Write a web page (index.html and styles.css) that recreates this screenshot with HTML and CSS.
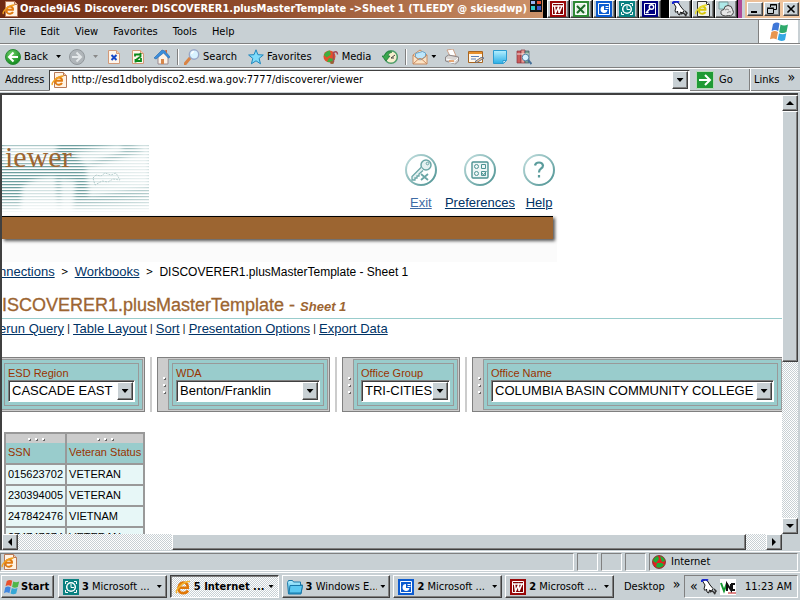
FILE: index.html
```html
<!DOCTYPE html>
<html lang="en">
<head>
<meta charset="utf-8">
<title>Oracle9iAS Discoverer</title>
<link rel="stylesheet" href="styles.css">
</head>
<body>
<svg class="defs" aria-hidden="true">
  <defs>
    <radialGradient id="green" cx=".4" cy=".3" r=".7"><stop offset="0" stop-color="#6fd069"/><stop offset="1" stop-color="#118a1c"/></radialGradient>
    <linearGradient id="blue" x2="0" y2="1"><stop offset="0" stop-color="#b6f0ff"/><stop offset="1" stop-color="#2aaee6"/></linearGradient>
    <linearGradient id="ring" x2="1" y2="1"><stop offset="0" stop-color="#c3dfdf"/><stop offset="1" stop-color="#4c9292"/></linearGradient>
  </defs>
  <symbol id="ie-page" viewBox="0 0 16 16">
    <path d="M3.500.500h9l3 3v12h-12z" fill="#fff3e4" stroke="#b97a58"/><path d="M12.500.500v3h3" fill="#f6c9a4" stroke="#b97a58"/>
    <path d="M11 11c-1 2-4.500 2.500-6 .500C3.500 9 5 5.500 7.800 5.500c2.200 0 3.500 1.500 3.200 3.200H5" fill="none" stroke="#e07a10" stroke-width="2"/>
    <path d="M1.500 13c-2-2 5-9 11-9" fill="none" stroke="#f2a020" stroke-width="1.500"/>
  </symbol>
  <symbol id="ie-yellow" viewBox="0 0 16 16">
    <path d="M2.500.500h9l3 3v12h-12z" fill="#f2f2ea" stroke="#333"/><path d="M11.500.500v3h3" fill="#fff" stroke="#333"/>
    <path d="M10.500 11c-1 2-4.500 2.500-6 .500C3 9 4.500 5.500 7.300 5.500c2.200 0 3.500 1.500 3.200 3.200h-6" fill="none" stroke="#d8c80a" stroke-width="2"/>
    <path d="M1 13c-2-2 5-9 11-9" fill="none" stroke="#e8dc30" stroke-width="1.500"/>
  </symbol>
  <symbol id="ie" viewBox="0 0 16 16">
    <path d="M13 11.500c-2 3.500-7.500 3.500-9 .2C2.300 8 5 3.500 8.500 3.500c3 0 4.600 2.500 4.300 5.200H4.500" fill="none" stroke="#e07808" stroke-width="2.600"/>
    <path d="M2 14c-3-2 6-12 13-11.500" fill="none" stroke="#f5b32c" stroke-width="1.600"/>
  </symbol>
  <symbol id="back" viewBox="0 0 16 16"><circle cx="8" cy="8" r="7.500" fill="url(#green)" stroke="#2b8a38"/><path d="M8.500 3.500L4 8l4.500 4.500M4.500 8H13" fill="none" stroke="#fff" stroke-width="2"/></symbol>
  <symbol id="forward" viewBox="0 0 16 16"><circle cx="8" cy="8" r="7.500" fill="#b0b6ba" stroke="#92989c"/><path d="M7.500 3.500L12 8l-4.500 4.500M11.500 8H3" fill="none" stroke="#e4e8ea" stroke-width="2"/></symbol>
  <symbol id="page" viewBox="0 0 16 16"><path d="M2.500 1.500h8l3 3v10h-11z" fill="#fff6ec" stroke="#d39a78"/><path d="M10.500 1.500v3h3" fill="#f7cfb2" stroke="#d39a78"/></symbol>
  <symbol id="stop" viewBox="0 0 16 16"><use href="#page"/><path d="M5.500 6l5 5M10.500 6l-5 5" stroke="#1648c8" stroke-width="2"/></symbol>
  <symbol id="refresh" viewBox="0 0 16 16"><use href="#page"/><path d="M5 7.500V5.500h6M10.500 4v3.500L6 11M11 9v3H5M5.500 13.500V10" fill="none" stroke="#0a8a1e" stroke-width="1.800"/></symbol>
  <symbol id="home" viewBox="0 0 16 16"><path d="M4 8v7h10V7L9 3z" fill="#fff3e6" stroke="#9a8a90"/><path d="M0 9l8-8 3 1 5 6-1.500 1.200L9.500 4 2 10z" fill="#3b8fdc" stroke="#2364ac" stroke-width=".6"/><path d="M11 1h2v4" fill="#c46b42"/><path d="M7 10h3v5H7z" fill="#d5874c"/></symbol>
  <symbol id="search" viewBox="0 0 16 16"><path d="M1 15l5-6" stroke="#d98445" stroke-width="3" stroke-linecap="round"/><circle cx="10" cy="5.500" r="4.700" fill="#d8f2ff" stroke="#9aa7c7" stroke-width="1.400"/><path d="M7.500 5q.5-2 2.500-2.400" stroke="#fff" stroke-width="1.500" fill="none"/></symbol>
  <symbol id="star" viewBox="0 0 16 16"><path d="M8 .8l1.900 4.900 5.400.3-4.200 3.400 1.400 5.400L8 11.800l-4.600 3 1.400-5.400L.6 6l5.400-.3z" fill="#7fdcfb" stroke="#1e87bd"/></symbol>
  <symbol id="media" viewBox="0 0 16 16"><circle cx="6.500" cy="7.500" r="6" fill="#e4502a"/><path d="M.8 6q2-4 6-4.500l1 4-4 3zM4 13l2-4 6 1-3 3z" fill="#3eaf3e"/><path d="M10.500 13V3.500q4-2 4 2" fill="none" stroke="#a3495c" stroke-width="1.500"/><ellipse cx="9" cy="13.500" rx="2" ry="1.500" fill="#9b6135"/></symbol>
  <symbol id="history" viewBox="0 0 16 16"><circle cx="9" cy="8" r="6.300" fill="#f7efcf" stroke="#4d9d69" stroke-width="1.500"/><path d="M0 7l4 5 4-5H6q0-3 4-4-5-2-8 4z" fill="#39a84e" stroke="#167030" stroke-width=".7"/><path d="M9 9l4-3M9 9h3" stroke="#444"/></symbol>
  <symbol id="mail" viewBox="0 0 16 16"><path d="M1 6l7-5 7 5v9H1z" fill="#fde3c4" stroke="#c88c62"/><path d="M3.500 4.500l7-2 3 1.500V8L8 11 3.500 8z" fill="#bde6fb" stroke="#6aa6cc"/><path d="M1 15l6-5.500h2l6 5.500M1 6l6 5M15 6l-6 5" fill="none" stroke="#c88c62"/></symbol>
  <symbol id="print" viewBox="0 0 16 16"><path d="M3 1l6-1 3 7H6z" fill="#fff" stroke="#c58f70" stroke-width=".8"/><path d="M1.500 8l3-2 10 2v4l-3 3-10-3z" fill="#d9d6d4" stroke="#8d8788"/><path d="M2 10l9 2 3-3M5 13l6 1" stroke="#fff" fill="none"/><path d="M5 12h5" stroke="#e39354" stroke-width="1.500"/></symbol>
  <symbol id="edit" viewBox="0 0 16 16"><path d="M.5 2.500h14v11H.5z" fill="#fff8ec" stroke="#a86520"/><path d="M1 3h13v2H1z" fill="#e8902a"/><path d="M3 7.500h8M3 10h5" stroke="#5b80b8"/><path d="M7 12.500l6-4 3 .5-7 4.500z" fill="#f1c48e" stroke="#465f8c" stroke-width=".8"/></symbol>
  <symbol id="note" viewBox="0 0 16 16"><path d="M1.500 1.500h13v10l-3 3h-10z" fill="url(#blue)" stroke="#2b9cd0"/><path d="M14 11.500h-3V14" fill="#fff" stroke="#2b9cd0"/></symbol>
  <symbol id="research" viewBox="0 0 16 16"><path d="M1 2h4v12H1z" fill="#c95a5a" stroke="#8a3440" stroke-width=".7"/><path d="M5 1h4v13H5z" fill="#e79a92" stroke="#8a3440" stroke-width=".7"/><path d="M9 2h4v12H9z" fill="#7aa590" stroke="#456" stroke-width=".7"/><path d="M1 5h12" stroke="#fff" stroke-width=".8"/><circle cx="9.500" cy="8.500" r="3.300" fill="#d9f2ff" stroke="#5885a8"/><path d="M12 11l3.500 4" stroke="#456f98" stroke-width="2"/></symbol>
  <symbol id="flag" viewBox="0 0 16 16"><path d="M2.800 2q3-2 5.400-.2L7.100 7.300q-2.700-2-5.600 0z" fill="#e8502c"/><path d="M9.200 2.500q2.800 1.600 6 0l-1.400 5.500q-3 1.600-5.700 0z" fill="#4fb648"/><path d="M1.200 8.500q2.800-2 5.500 0l-1.300 5.700q-2.700-2-5.400 0z" fill="#3f86e0"/><path d="M7.800 9q2.800 1.600 5.700 0l-1.300 5.500q-3 1.600-5.700 0z" fill="#35a8d6"/></symbol>
  <symbol id="winflag" viewBox="0 0 20 20"><path d="M4 2q4-2.500 6.500-.5L9.200 9Q6 7 2.600 9z" fill="#3f78d8"/><path d="M11.500 2.500q3.500 2 7.500 0L17.500 10q-3.500 2-7.300.2z" fill="#2faa6c"/><path d="M2.400 10q3.300-2 6.600 0l-1.400 7.500q-3.200-2-6.600-.2z" fill="#e8964e"/><path d="M10 11.200q3.500 2 7.300 0L16 18q-3.800 2-7.400-.2z" fill="#35a8e6"/></symbol>
  <symbol id="word" viewBox="0 0 16 16"><path d="M0 0h16v16H0z" fill="#990808"/><path d="M2.500 2.500h11v11h-11z" fill="#800000" stroke="#fff"/><path d="M3 5h10M4.500 5l1 7 3-6 .5 6 3-7" fill="none" stroke="#fff" stroke-width="1.500"/></symbol>
  <symbol id="excel" viewBox="0 0 16 16"><path d="M0 0h16v16H0z" fill="#2f8a35"/><path d="M2.500 2.500h11v11h-11z" fill="#e7f3e4" stroke="#fff"/><path d="M4 5l7 7M12 4l-8 8" stroke="#1c6a28" stroke-width="2"/></symbol>
  <symbol id="outlook" viewBox="0 0 16 16"><path d="M0 0h16v16H0z" fill="#0b5bd0"/><path d="M2.500 2.500h11v11h-11z" fill="none" stroke="#fff"/><path d="M8 5a3.500 3.500 0 1 0 3.500 4H8z" fill="#fff"/><path d="M9.500 5.500h3M9.500 7.500h3" stroke="#fff"/></symbol>
  <symbol id="clock" viewBox="0 0 16 16"><path d="M0 0h16v16H0z" fill="#0a8080"/><path d="M5 2.500H2.500V5M11 2.500h2.500V5M2.500 11v2.500H5M13.500 11v2.500H11" fill="none" stroke="#fff"/><circle cx="8" cy="8" r="4.300" fill="none" stroke="#fff" stroke-width="1.500"/><path d="M8 5v3.500h3" fill="none" stroke="#fff"/></symbol>
  <symbol id="key" viewBox="0 0 16 16"><path d="M0 0h16v16H0z" fill="#000080"/><path d="M2.500 2.500h11v11h-11z" fill="none" stroke="#fff"/><circle cx="9.500" cy="6" r="2.200" fill="none" stroke="#fff" stroke-width="1.400"/><path d="M8 7.500L4 12M5 11l1.500 1" stroke="#fff" stroke-width="1.500"/></symbol>
  <symbol id="hand" viewBox="0 0 16 16"><path d="M1.500 2q3-2 5 0l2.500 4 3 3.500-1.500 2.500-2-1-1 3-1.500-1-.5-3-1.500 1.500-1-1.500 1-4z" fill="#fff" stroke="#000" stroke-width=".9"/><path d="M1 3V1.500q3-2 6 0" fill="none" stroke="#1726d0" stroke-width="2"/><path d="M8.500 13l3-1 3 3M13 10l2 2-2 3" fill="none" stroke="#333" stroke-width="1.500"/></symbol>
  <symbol id="cloud" viewBox="0 0 16 16"><path d="M1 1h9v7H1z" fill="#aee9e9" stroke="#7a9a9a"/><path d="M5 14.500q-3-1-2-4 1-2 3-2 0-4 4-4t4.500 4q2 3 0 5-2 2-4 1-3 1-5.500 0z" fill="#e6e6e6" stroke="#444"/><path d="M7 9q2-2 4 0M9 12q2-2 4-1" fill="none" stroke="#888"/></symbol>
  <symbol id="folder" viewBox="0 0 16 16"><path d="M.5 3.500l1-2h4l1 1.500h7v3h2l-1.500 9H1.500z" fill="url(#blue)" stroke="#1a78a8"/><path d="M3 6.500h12.500L14 14H2z" fill="#5cc9f2" stroke="#1a78a8"/></symbol>
  <symbol id="globe" viewBox="0 0 16 16"><circle cx="8" cy="8" r="6.500" fill="#e02020" stroke="#5a0a0a" stroke-width=".6"/><path d="M2 7q1-4 5-5l1 3-3 4zM9 2q4 1 5 5l-3 1zM5 13l1-4 5 0 2 2q-3 4-8 2z" fill="#1cae38"/></symbol>
  <symbol id="vnc" viewBox="0 0 16 16"><path d="M0 0h16v16H0z" fill="#fff"/><path d="M1 4l3 8 3-8" fill="none" stroke="#149a30" stroke-width="2"/><path d="M7 12V5l4 6V5M15 5h-3v6h3" fill="none" stroke="#111" stroke-width="2"/><path d="M8 14h8" stroke="#c01010"/></symbol>
  <symbol id="tiles" viewBox="0 0 12 12"><path d="M0 0h12v12H0z" fill="#111"/><path d="M1 1h4v3H1z" fill="#9ab4f0"/><path d="M7 1h4v3H7z" fill="#e85030"/><path d="M1 6h4v4H1z" fill="#30c8c8"/><path d="M7 6h4v4H7z" fill="#3c58c8"/></symbol>
</svg>

<header class="titlebar">
  <svg class="icon"><use href="#ie-page"/></svg>
  <h1>Oracle9iAS Discoverer: DISCOVERER1.plusMasterTemplate -&gt;Sheet 1 (TLEEDY @ skiesdwp)</h1>
  <svg class="tiles"><use href="#tiles"/></svg>
  <div class="office">
    <button class="launch" aria-label="Word"><svg class="icon"><use href="#word"/></svg></button>
    <button class="launch" aria-label="Excel"><svg class="icon"><use href="#excel"/></svg></button>
    <button class="launch" aria-label="PowerPoint"><svg class="icon"><use href="#outlook"/></svg></button>
    <button class="launch" aria-label="Schedule"><svg class="icon"><use href="#clock"/></svg></button>
    <button class="launch" aria-label="Access"><svg class="icon"><use href="#key"/></svg></button>
    <span class="divider"></span>
    <button class="launch" aria-label="Assistant"><svg class="icon"><use href="#hand"/></svg></button>
    <button class="launch" aria-label="Browser"><svg class="icon"><use href="#ie-yellow"/></svg></button>
    <button class="launch" aria-label="Network"><svg class="icon"><use href="#cloud"/></svg></button>
    <span class="stub"></span>
  </div>
  <div class="caption">
    <button aria-label="Minimize"><svg viewBox="0 0 10 10"><path d="M1 8h6" stroke="#000" stroke-width="2"/></svg></button>
    <button aria-label="Restore"><svg viewBox="0 0 10 10"><path d="M3.500 3V.500h6v5H7M3 1h7M.500 4.500h6v5h-6zM0 4h7" fill="none" stroke="#000"/></svg></button>
    <button class="close" aria-label="Close"><svg viewBox="0 0 10 10"><path d="M1.500 1.500l7 7M8.500 1.500l-7 7" stroke="#000" stroke-width="1.600"/></svg></button>
  </div>
</header>

<div class="menubar">
  <nav class="menus"><button>File</button><button>Edit</button><button>View</button><button>Favorites</button><button>Tools</button><button>Help</button></nav>
  <div class="brand"><svg class="windows"><use href="#winflag"/></svg></div>
</div>

<div class="toolbar">
  <div class="tools">
    <button class="tool"><svg class="icon"><use href="#back"/></svg><span>Back</span></button>
    <span class="caret"></span>
    <button class="tool" aria-label="Forward"><svg class="icon"><use href="#forward"/></svg></button>
    <span class="caret dim"></span>
    <button class="tool" aria-label="Stop"><svg class="icon"><use href="#stop"/></svg></button>
    <button class="tool" aria-label="Refresh"><svg class="icon"><use href="#refresh"/></svg></button>
    <button class="tool" aria-label="Home"><svg class="icon"><use href="#home"/></svg></button>
  </div>
  <div class="tools wide">
    <button class="tool"><svg class="icon"><use href="#search"/></svg><span>Search</span></button>
    <button class="tool"><svg class="icon"><use href="#star"/></svg><span>Favorites</span></button>
    <button class="tool"><svg class="icon"><use href="#media"/></svg><span>Media</span></button>
    <button class="tool" aria-label="History"><svg class="icon"><use href="#history"/></svg></button>
  </div>
  <div class="tools">
    <button class="tool" aria-label="Mail"><svg class="icon"><use href="#mail"/></svg><i class="caret"></i></button>
    <button class="tool" aria-label="Print"><svg class="icon"><use href="#print"/></svg></button>
    <button class="tool" aria-label="Edit"><svg class="icon"><use href="#edit"/></svg></button>
    <button class="tool" aria-label="Discuss"><svg class="icon"><use href="#note"/></svg></button>
    <button class="tool" aria-label="Research"><svg class="icon"><use href="#research"/></svg></button>
  </div>
</div>

<div class="addressbar">
  <label for="url">Address</label>
  <div class="field">
    <svg class="icon"><use href="#ie-page"/></svg>
    <input id="url" type="text" value="http://esd1dbolydisco2.esd.wa.gov:7777/discoverer/viewer">
    <button class="drop" aria-label="Show history"><span class="caret"></span></button>
  </div>
  <button class="go"><svg viewBox="0 0 18 18"><path d="M.500.500h17v17H.500z" fill="#1f9a35" stroke="#b7dcb8"/><path d="M3 9h11M9 4l5 5-5 5" fill="none" stroke="#fff" stroke-width="2"/></svg>Go</button>
  <button class="links">Links <span>»</span></button>
</div>

<div class="viewport">
  <main class="page">
    <div class="banner">
      <div class="logo">
        <svg viewBox="0 0 147 68" preserveAspectRatio="none">
          <defs>
            <pattern id="lines" width="3" height="3" patternUnits="userSpaceOnUse"><path d="M0 0h3v1H0z" fill="#6d9f9f"/><path d="M0 1h3v1H0z" fill="#d8e5e5"/></pattern>
            <filter id="soft"><feGaussianBlur stdDeviation="2"/></filter>
            <linearGradient id="fade"><stop offset=".5" stop-color="#fff" stop-opacity="0"/><stop offset="1" stop-color="#fff" stop-opacity=".5"/></linearGradient>
            <linearGradient id="foot" x2="0" y2="1"><stop offset=".75" stop-color="#fff" stop-opacity="0"/><stop offset="1" stop-color="#fff"/></linearGradient>
          </defs>
          <path d="M0 0h147v68H0z" fill="url(#lines)"/>
          <g filter="url(#soft)" fill="#fff" opacity=".7">
            <path d="M20 42q16-12 34-10l3 36H18zM58 34l16 2-3 32H58zM84 22l63-16v36l-60 10zM0 0h56l-6 18H0zM70 8l44-8h4l4 6-38 14zM130 0h17v8z"/>
          </g>
          <path d="M91 33l3-3 5 1 4-3 6 2 5-2 4 7-7-1-5 3-6-1-7 4z" fill="none" stroke="#a5c2c2" stroke-dasharray="2 1"/>
          <path d="M0 0h147v68H0z" fill="url(#fade)"/><path d="M0 0h147v68H0z" fill="url(#foot)"/>
        </svg>
        <span class="product">iewer</span>
      </div>
      <nav class="global">
        <a class="visited" href="#exit"><svg viewBox="0 0 32 32"><circle cx="16" cy="16" r="15" fill="#fff" stroke="url(#ring)" stroke-width="2"/><circle cx="21" cy="11" r="5" fill="#e4f1f1" stroke="#6ba6a6" stroke-width="1.500"/><circle cx="22.500" cy="9.500" r="1.300" fill="none" stroke="#6ba6a6"/><path d="M16.500 13L7 22.500V26h3v-2h2v-2h2v-2l4-3.500" fill="#e4f1f1" stroke="#6ba6a6" stroke-width="1.300"/><path d="M16 20l7 6M23 20l-7 6" stroke="#6ba6a6" stroke-width="1.800"/></svg>Exit</a>
        <a href="#preferences"><svg viewBox="0 0 32 32"><circle cx="16" cy="16" r="15" fill="#fff" stroke="url(#ring)" stroke-width="2"/><rect x="8" y="8" width="16" height="16" rx="1" fill="#eef6f6" stroke="#4f9494" stroke-width="1.400"/><circle cx="12.500" cy="12.500" r="2" fill="none" stroke="#4f9494"/><circle cx="12.500" cy="19.500" r="2" fill="none" stroke="#4f9494"/><path d="M17.500 10.500h4v4h-4zM17.500 17.500h4v4h-4zM18 19l1.500 2 3-4" fill="none" stroke="#4f9494"/></svg>Preferences</a>
        <a href="#help"><svg viewBox="0 0 32 32"><circle cx="16" cy="16" r="15" fill="#fff" stroke="url(#ring)" stroke-width="2"/><path d="M12 11.500q.5-3 4-3t4 3q0 2-2.200 3.300-1.800 1.100-1.800 3.700M16 21v2.500" fill="none" stroke="#5b9c9c" stroke-width="2.200"/></svg>Help</a>
      </nav>
    </div>
    <div class="stripe"><div class="bar"></div></div>
    <nav class="crumbs"><a href="#connections">nnections</a><i>&gt;</i><a href="#workbooks">Workbooks</a><i>&gt;</i><span>DISCOVERER1.plusMasterTemplate - Sheet 1</span></nav>
    <h2>ISCOVERER1.plusMasterTemplate - <em>Sheet 1</em></h2>
    <nav class="actions"><a href="#rerun">erun Query</a><i>|</i><a href="#layout">Table Layout</a><i>|</i><a href="#sort">Sort</a><i>|</i><a href="#options">Presentation Options</a><i>|</i><a href="#export">Export Data</a></nav>
    <form class="filters">
      <div class="axis first"><div class="item"><label for="region">ESD Region</label><div class="pick region"><select id="region"><option>CASCADE EAST</option></select><span class="drop"><i class="caret"></i></span></div></div></div>
      <span class="slot"></span>
      <div class="axis"><span class="grip"><i></i><i></i><i></i></span><div class="item"><label for="wda">WDA</label><div class="pick wda"><select id="wda"><option>Benton/Franklin</option></select><span class="drop"><i class="caret"></i></span></div></div></div>
      <span class="slot"></span>
      <div class="axis"><span class="grip"><i></i><i></i><i></i></span><div class="item"><label for="group">Office Group</label><div class="pick group"><select id="group"><option>TRI-CITIES</option></select><span class="drop"><i class="caret"></i></span></div></div></div>
      <span class="slot"></span>
      <div class="axis"><span class="grip"><i></i><i></i><i></i></span><div class="item"><label for="office">Office Name</label><div class="pick office-name"><select id="office"><option>COLUMBIA BASIN COMMUNITY COLLEGE</option></select><span class="drop"><i class="caret"></i></span></div></div></div>
    </form>
    <table class="data">
      <thead>
        <tr><th><div class="handle"><i></i><i></i><i></i></div><span>SSN</span></th><th><div class="handle"><i></i><i></i><i></i></div><span>Veteran Status</span></th></tr>
      </thead>
      <tbody>
        <tr><td>015623702</td><td>VETERAN</td></tr>
        <tr><td>230394005</td><td>VETERAN</td></tr>
        <tr><td>247842476</td><td>VIETNAM</td></tr>
        <tr><td>274747274</td><td>VETERAN</td></tr>
      </tbody>
    </table>
  </main>
  <div class="scroll vertical">
    <button class="arrow" aria-label="Scroll up"><svg viewBox="0 0 8 8"><path d="M0 6l4-4 4 4z"/></svg></button>
    <span class="thumb"></span><span class="track"></span>
    <button class="arrow" aria-label="Scroll down"><svg viewBox="0 0 8 8"><path d="M0 2l4 4 4-4z"/></svg></button>
  </div>
  <div class="scroll horizontal">
    <button class="arrow" aria-label="Scroll left"><svg viewBox="0 0 8 8"><path d="M6 0L2 4l4 4z"/></svg></button>
    <span class="track before"></span><span class="thumb"></span><span class="track after"></span>
    <button class="arrow" aria-label="Scroll right"><svg viewBox="0 0 8 8"><path d="M2 0l4 4-4 4z"/></svg></button>
  </div>
</div>

<div class="status">
  <div class="pane main"><svg class="icon"><use href="#ie-page"/></svg></div>
  <div class="pane"></div><div class="pane"></div><div class="pane"></div>
  <div class="pane zone"><svg class="icon"><use href="#globe"/></svg>Internet</div>
</div>

<footer class="taskbar">
  <button class="start"><svg class="icon"><use href="#flag"/></svg>Start</button>
  <div class="tasks">
    <button class="task"><svg class="icon"><use href="#clock"/></svg><span><b>3</b> Microsoft ...</span><i class="caret"></i></button>
    <button class="task active"><svg class="icon"><use href="#ie"/></svg><span><b>5</b> Internet ...</span><i class="caret"></i></button>
    <button class="task"><svg class="icon"><use href="#folder"/></svg><span><b>3</b> Windows E...</span><i class="caret"></i></button>
    <button class="task"><svg class="icon"><use href="#outlook"/></svg><span><b>2</b> Microsoft ...</span><i class="caret"></i></button>
    <button class="task"><svg class="icon"><use href="#word"/></svg><span><b>2</b> Microsoft ...</span><i class="caret"></i></button>
  </div>
  <div class="desktop">Desktop <span>»</span></div>
  <div class="tray"><span>«</span><svg class="icon"><use href="#hand"/></svg><svg class="icon"><use href="#vnc"/></svg><time>11:23 AM</time></div>
</footer>
</body>
</html>
```
FILE: styles.css
```css
:root {
  --face: #c8d0d4;
  --shade: #808080;
  --dark: #404040;
  --teal: #99cccc;
  --ink: #003366;
  --rust: #993300;
  --ui: "DejaVu Sans Condensed", "DejaVu Sans", sans-serif;
  --dither: repeating-conic-gradient(#fff 0 25%, var(--face) 0 50%) 0 0 / 2px 2px;
}

* { box-sizing: border-box; }

body {
  margin: 0;
  height: 100vh;
  display: flex;
  flex-direction: column;
  overflow: hidden;
  background: var(--face);
  color: #000;
  font: 11px/14px var(--ui);
}

button, input, select { font: inherit; color: inherit; margin: 0; padding: 0; border: 0; border-radius: 0; background: none; }
button { display: flex; align-items: center; white-space: nowrap; }
.defs { position: absolute; width: 0; height: 0; }
.icon { width: 16px; height: 16px; flex: none; display: block; }
.caret { flex: none; width: 5px; height: 3px; background: #000; clip-path: polygon(0 0, 100% 0, 50% 100%); }
.caret.dim { background: #888; }

/* Raised controls */
.drop, .arrow, .thumb, .launch, .caption button, .start, .task {
  background: var(--face);
  border: 1px solid;
  border-color: #fff var(--dark) var(--dark) #fff;
  box-shadow: inset -1px -1px var(--shade);
}

/* Title bar */
.titlebar { display: flex; align-items: center; height: 18px; flex: none; padding-left: 2px; background: linear-gradient(90deg, #6e2a12, #94502f 35%, #c98d64 65%, #f3c9a2); }
.titlebar h1 { flex: 1; min-width: 0; overflow: hidden; margin: 0 0 0 2px; color: #fff; font: bold 11px/16px var(--ui); white-space: nowrap; }
.tiles { flex: none; align-self: flex-start; width: 12px; height: 12px; margin-right: 1px; }
.office { display: flex; align-items: center; gap: 1px; height: 18px; padding-left: 4px; background: #000; }
.launch { width: 22px; height: 18px; justify-content: center; }
.divider { width: 6px; }
.stub { width: 7px; height: 18px; background: var(--face); border-left: 4px solid #b04a98; }
.caption { display: flex; gap: 1px; padding: 0 1px 0 2px; }
.caption button { width: 16px; height: 14px; justify-content: center; }
.caption .close { margin-left: 2px; }
.caption svg { width: 10px; height: 10px; }

/* Menu bar */
.menubar { display: flex; height: 27px; flex: none; border-top: 1px solid #fff; border-bottom: 1px solid #fff; box-shadow: inset 0 1px var(--shade), inset 0 -1px var(--shade); }
.menus { flex: 1; display: flex; align-items: center; gap: 15px; padding-left: 9px; }
.brand { width: 39px; margin: 1px 2px 1px 0; display: grid; place-items: center; background: #fff; box-shadow: -1px 0 var(--shade); }
.windows { width: 20px; height: 20px; }

/* Toolbar */
.toolbar { display: flex; align-items: center; height: 24px; flex: none; padding-left: 5px; border-bottom: 1px solid #fff; box-shadow: inset 0 -1px var(--shade); }
.tools { display: flex; align-items: center; gap: 8px; }
.tools + .tools { margin-left: 7px; padding-left: 6px; border-left: 1px solid var(--shade); box-shadow: inset 1px 0 #fff; }
.tools.wide { gap: 11px; }
.tool { gap: 3px; }

/* Address bar */
.addressbar { display: flex; align-items: center; height: 23px; flex: none; padding-left: 5px; border-bottom: 1px solid #fff; box-shadow: inset 0 -1px var(--shade); }
.field { flex: 1; display: flex; align-items: center; gap: 4px; height: 21px; margin-left: 5px; padding: 0 1px; background: #fff; border: 1px solid; border-color: var(--dark) #fff #fff var(--dark); }
.field input { flex: 1; min-width: 0; outline: 0; }
.drop { display: grid; place-items: center; width: 16px; }
.drop .caret { width: 7px; height: 4px; }
.field .drop { height: 18px; }
.go { gap: 5px; width: 59px; padding-left: 6px; }
.go svg { width: 18px; height: 18px; }
.links { align-self: stretch; gap: 8px; width: 51px; padding-left: 4px; border-left: 1px solid var(--shade); box-shadow: inset 1px 0 #fff; }
.links span, .desktop span, .tray span { font-size: 14px; line-height: 8px; padding-bottom: 6px; }
.tray span { padding-bottom: 2px; }

/* Browser viewport */
.viewport { flex: 1; min-height: 0; display: grid; grid-template: 1fr 16px / minmax(0, 1fr) 16px; margin: 1px 2px 0 0; border: solid var(--dark); border-width: 2px 0 0 2px; }
.page { min-height: 0; overflow: hidden; background: #fff; font: 13px/16px "Liberation Sans", Arial, sans-serif; }
.page a { color: var(--ink); }
.page a.visited { color: #3f6ba5; }
.scroll { display: flex; }
.vertical { flex-direction: column; }
.arrow { flex: none; width: 16px; height: 16px; justify-content: center; }
.arrow svg { width: 8px; height: 8px; flex: none; }
.track { background: var(--dither); flex: 157; }
.thumb { flex: 250; }
.horizontal .before { flex: 154; }
.horizontal .thumb { flex: 574; }
.horizontal .after { flex: 20; }

/* Discoverer page */
.banner { display: flex; justify-content: space-between; align-items: flex-start; max-width: 553px; padding-top: 50px; }
.logo { display: grid; }
.logo > * { grid-area: 1 / 1; }
.logo svg { width: 147px; height: 68px; }
.product { padding-left: 3px; color: #9c6531; font: 30px/24px "Liberation Serif", "Times New Roman", serif; }
.global { display: flex; gap: 8px; padding-top: 9px; }
.global a { display: flex; flex-direction: column; align-items: center; gap: 9px; min-width: 32px; }
.global svg { width: 32px; height: 32px; }
.stripe { max-width: 555px; height: 46px; padding-right: 4px; margin-top: 3px; background: #fbfbfb; }
.bar { height: 23px; background: #9c6531; border-top: 1px solid #000; box-shadow: 2px 2px 3px #555; }
.crumbs, .actions { display: flex; margin-left: -3px; padding-top: 2px; white-space: nowrap; }
.crumbs i { width: 20px; text-align: center; font: 10px/16px var(--ui); }
.crumbs span { font-size: 12px; }
.page h2 { margin: 14px 0 0; color: #9c6531; font-size: 18px; line-height: 23px; font-weight: normal; -webkit-text-stroke: 0.3px; border-bottom: 1px solid var(--teal); white-space: nowrap; }
.page h2 em { font-size: 13px; font-weight: bold; -webkit-text-stroke: 0; }
.actions i { width: 9px; text-align: center; font-style: normal; font-size: 10px; }

.filters { display: flex; gap: 5px; margin-top: 20px; width: max-content; }
.slot { width: 2px; background: #ccc; }
.axis { display: flex; background: #ccc; border: 1px solid var(--shade); padding: 1px; }
.axis.first { border-left: 0; padding-left: 0; }
.item { position: relative; background: var(--teal); border: 1px solid #999; padding: 6px 7px 7px; }
.item::before { content: ""; position: absolute; inset: 3px; border: 1px solid #999; }
.first .item { border-left: 0; padding-left: 6px; }
.first .item::before { left: 2px; }
.item label { display: block; color: var(--rust); font-size: 11px; line-height: 14px; }
.grip { width: 9px; display: flex; flex-direction: column; align-items: center; justify-content: center; gap: 5px; }
.grip i, .handle i { width: 2px; height: 2px; background: #fff; box-shadow: 1px 1px #666; }
.pick { position: relative; height: 22px; background: #fff; border: 1px solid; border-color: var(--shade) #fff #fff var(--shade); box-shadow: inset 1px 1px var(--dark); }
.pick select { appearance: none; width: 100%; height: 20px; padding-left: 3px; outline: 0; }
.pick .drop { position: absolute; inset: 1px 1px 1px auto; pointer-events: none; }
.region { width: 127px; }
.wda { width: 144px; }
.group { width: 89px; }
.office-name { width: 283px; }

.data { border-collapse: collapse; margin: 20px 0 0 2px; font-size: 11px; line-height: 15px; }
.data th, .data td { border: 2px solid #999; padding: 2px; background: #e7f7f7; text-align: left; white-space: nowrap; }
.data th { padding: 0; background: var(--teal); color: var(--rust); font-weight: normal; }
.data th span { display: block; padding: 2px 2px 3px; }
.handle { display: flex; justify-content: center; align-items: center; gap: 5px; height: 9px; background: #ccc; }

/* Status bar */
.status { display: flex; gap: 3px; height: 21px; flex: none; margin-top: 1px; padding: 1px 2px 1px 0; border-top: 1px solid #fff; }
.pane { display: flex; align-items: center; width: 21px; border: 1px solid; border-color: var(--shade) #fff #fff var(--shade); }
.pane.main { flex: 1; }
.pane.zone { width: 149px; gap: 4px; padding-left: 1px; }

/* Taskbar */
.taskbar { display: flex; height: 28px; flex: none; padding: 2px 2px 2px 1px; border-top: 1px solid #fff; align-items: center; }
.start { height: 23px; width: 53px; gap: 1px; padding-left: 2px; font-weight: bold; }
.tasks { flex: 1; max-width: 556px; display: flex; gap: 3px; margin-left: 4px; }
.task { flex: 1; min-width: 0; height: 23px; gap: 3px; padding: 0 4px; }
.task span { flex: 1; text-align: left; overflow: hidden; white-space: pre; }
.task.active { background: var(--dither); border-color: var(--dark) #fff #fff var(--dark); box-shadow: inset 1px 1px var(--shade); font-weight: bold; }
.desktop { display: flex; gap: 8px; align-items: center; margin-left: 10px; }
.tray { display: flex; align-items: center; gap: 3px; height: 23px; width: 114px; margin-left: auto; padding: 0 5px; border: 1px solid; border-color: var(--shade) #fff #fff var(--shade); }
.tray time { margin-left: auto; white-space: nowrap; }
```
